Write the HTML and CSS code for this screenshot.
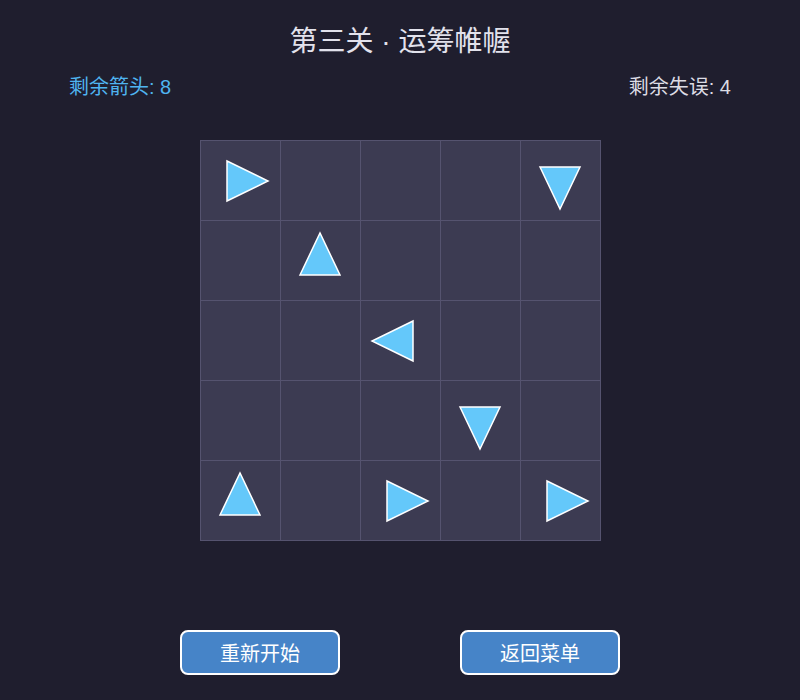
FILE: index.html
```html
<!DOCTYPE html>
<html>
<head>
  <meta charset="utf-8">
  <title>第三关 · 运筹帷幄</title>
  <link rel="stylesheet" href="styles.css">
</head>
<body>
  <div class="page">
    <h1 class="title">第三关 · 运筹帷幄</h1>
    <div class="stats">
      <span class="arrows-left">剩余箭头: 8</span>
      <span class="misses-left">剩余失误: 4</span>
    </div>
    <div class="board" id="board"></div>
    <div class="actions">
      <button class="btn">重新开始</button>
      <button class="btn">返回菜单</button>
    </div>
  </div>
  <script type="text/javascript">
    var LEVEL = [
      'R...D',
      '.U...',
      '..L..',
      '...D.',
      'U.R.R'
    ];
    var SHAPES = {
      R: '-13,-20 28,0 -13,20',
      L: '13,-20 -28,0 13,20',
      U: '-20,14 0,-28 20,14',
      D: '-20,-14 0,28 20,-14'
    };
    var board = document.querySelector('#board');

    LEVEL.forEach(function(row){
      row.split('').forEach(function(ch){
        var cell = document.createElement('div');
        cell.className = 'cell';
        if(SHAPES[ch]){
          cell.innerHTML = '<svg class="arrow" width="80" height="80" viewBox="-40 -40 80 80">' +
            '<polygon points="' + SHAPES[ch] + '"/></svg>';
        }
        board.appendChild(cell);
      });
    });
  </script>
</body>
</html>
```

FILE: styles.css
```css
*{margin: 0;padding: 0;box-sizing: border-box;}
html, body{
  height: 100%;
  width: 100%;
  background-color: #1f1e2e;
  font-family: "Liberation Sans", "Noto Sans CJK SC", sans-serif;
}
.page{
  display: flex;
  flex-direction: column;
  align-items: center;
}
.title{
  margin-top: 24px;
  height: 36px;
  font-size: 28px;
  line-height: 36px;
  font-weight: normal;
  color: #e2e2ec;
}
.stats{
  width: 100%;
  margin-top: 15px;
  padding: 0 69px;
  display: flex;
  justify-content: space-between;
  font-size: 20px;
  line-height: 24px;
}
.arrows-left{
  color: #4fb4f0;
}
.misses-left{
  color: #dcdce4;
}
.board{
  margin-top: 41px;
  width: 401px;
  height: 401px;
  padding: 1px;
  display: grid;
  grid-template-columns: repeat(5, 79px);
  grid-template-rows: repeat(5, 79px);
  gap: 1px;
  background-color: #55536f;
}
.cell{
  background-color: #3c3b52;
  display: flex;
  align-items: center;
  justify-content: center;
  overflow: visible;
}
.arrow{
  flex-shrink: 0;
  overflow: visible;
}
.arrow polygon{
  fill: #64c8fa;
  stroke: #ffffff;
  stroke-width: 1.5;
}
.actions{
  margin-top: 89px;
  display: flex;
  gap: 120px;
}
.btn{
  width: 160px;
  height: 45px;
  border: 2px solid #ffffff;
  border-radius: 8px;
  background-color: #4684c8;
  color: #ffffff;
  font-family: inherit;
  font-size: 20px;
  cursor: pointer;
}
```
